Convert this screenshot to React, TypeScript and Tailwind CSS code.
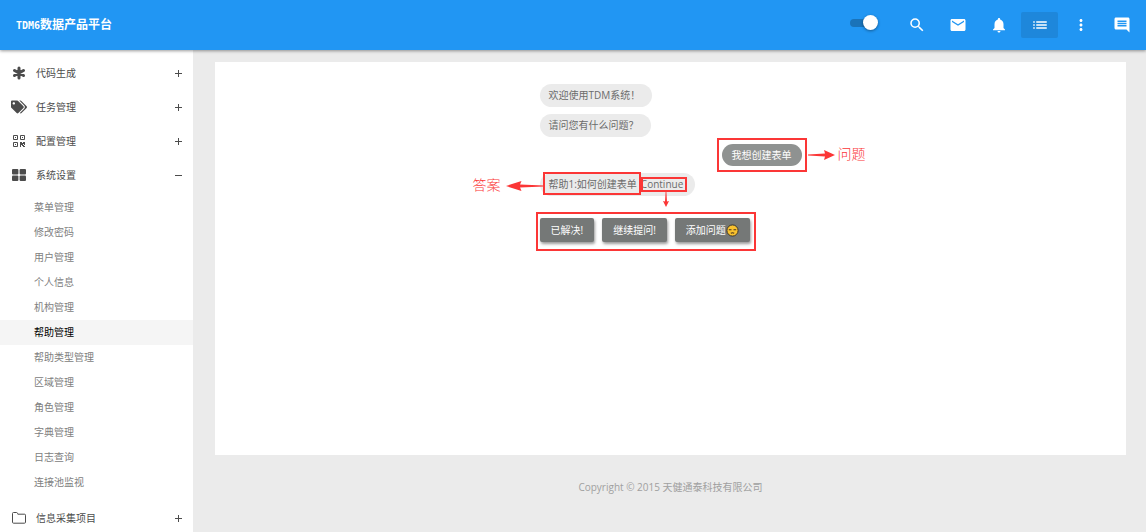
import type { ComponentType, ReactNode } from "react";
import { FaTags } from "react-icons/fa";
import {
  MdEmail,
  MdList,
  MdMessage,
  MdMoreVert,
  MdNotifications,
  MdSearch,
} from "react-icons/md";

type IconType = ComponentType<{ className?: string }>;

function AsteriskIcon({ className }: { className?: string }) {
  return (
    <svg
      aria-hidden="true"
      className={className}
      stroke="currentColor"
      strokeLinecap="round"
      strokeWidth="3"
      viewBox="0 0 14 14"
    >
      <path d="M7 2v10M2.5 4.5l9 5M11.5 4.5l-9 5" />
    </svg>
  );
}

function QrIcon({ className }: { className?: string }) {
  return (
    <svg aria-hidden="true" className={className} fill="none" stroke="currentColor" viewBox="0 0 14 14">
      <path d="M1.5 1.5h4v4h-4zM8.5 1.5h4v4h-4zM1.5 8.5h4v4h-4z" />
      <path d="M3 3h1v1H3zM10 3h1v1h-1zM3 10h1v1H3z" fill="currentColor" stroke="none" />
      <path
        d="M8 8h2v1h1V8h2v3h-1v-1h-1v1h1v1h1v1h-2v-1h-1v-1H9v2H8z"
        fill="currentColor"
        stroke="none"
      />
    </svg>
  );
}

function BlocksIcon({ className }: { className?: string }) {
  return (
    <svg aria-hidden="true" className={className} fill="currentColor" viewBox="0 0 14 14">
      <rect height="5.6" rx="1" width="6.4" x="0" y="1" />
      <rect height="5.6" rx="1" width="6.4" x="7.6" y="1" />
      <rect height="5.6" rx="1" width="6.4" x="0" y="7.4" />
      <rect height="5.6" rx="1" width="6.4" x="7.6" y="7.4" />
    </svg>
  );
}

function FolderIcon({ className }: { className?: string }) {
  return (
    <svg aria-hidden="true" className={className} fill="none" stroke="currentColor" viewBox="0 0 14 14">
      <path d="M.5 2.5q0-1 1-1h3q.8 0 1 .8l.3.9h6.7q1 0 1 1v7q0 1-1 1h-11q-1 0-1-1z" />
    </svg>
  );
}

type MenuItem = { label: string; icon: IconType; children?: string[] };

const menu: MenuItem[] = [
  { label: "代码生成", icon: AsteriskIcon },
  { label: "任务管理", icon: FaTags },
  { label: "配置管理", icon: QrIcon },
  {
    label: "系统设置",
    icon: BlocksIcon,
    children: [
      "菜单管理",
      "修改密码",
      "用户管理",
      "个人信息",
      "机构管理",
      "帮助管理",
      "帮助类型管理",
      "区域管理",
      "角色管理",
      "字典管理",
      "日志查询",
      "连接池监视",
    ],
  },
  { label: "信息采集项目", icon: FolderIcon },
];

const current = "帮助管理";

const actions = [
  { label: "搜索", icon: MdSearch },
  { label: "邮件", icon: MdEmail },
  { label: "通知", icon: MdNotifications },
  { label: "列表", icon: MdList, active: true },
  { label: "更多", icon: MdMoreVert },
  { label: "消息", icon: MdMessage, flip: true },
];

function Header() {
  return (
    <header className="relative z-10 flex h-[50px] items-center justify-between bg-[#2196f3] pr-1.5 pl-4 text-white shadow-[0_1px_3px_rgba(0,0,0,0.4)]">
      <a
        className="font-['DejaVu_Sans_Mono','Noto_Sans_CJK_SC',monospace] text-[12px] font-bold"
        href="#"
      >
        <span className="text-[10px]">TDM6</span>数据产品平台
      </a>
      <div className="flex items-center gap-1 pb-px">
        <label className="relative mr-4 mb-1 flex h-4 w-7 items-center">
          <input aria-label="切换布局" className="peer sr-only" defaultChecked type="checkbox" />
          <span className="h-2 w-full rounded-full bg-[#1a73b9]" />
          <span className="absolute left-0 size-[15px] rounded-full bg-white shadow-[0_1px_3px_rgba(0,0,0,0.4)] peer-checked:left-[13px]" />
        </label>
        {actions.map(({ label, icon: Icon, active, flip }) => (
          <button
            key={label}
            aria-label={label}
            className={[
              "grid h-[26px] w-[37px] place-items-center rounded-xs",
              active ? "bg-[#1e87db]" : "",
            ].join(" ")}
            type="button"
          >
            <Icon className={flip ? "size-[18px] -scale-x-100" : "size-[18px]"} />
          </button>
        ))}
      </div>
    </header>
  );
}

function Sidebar() {
  return (
    <aside className="w-[193px] shrink-0 bg-white pt-1.5 text-[10px]">
      <nav aria-label="主菜单">
        <ul>
          {menu.map(({ label, icon: Icon, children }) => (
            <li key={label}>
              <button
                aria-expanded={Boolean(children)}
                className="flex h-[34px] w-full items-center pr-2.5 pl-[11px] text-[#4c4c4c]"
                type="button"
              >
                <span className="mr-[9px] grid w-4 shrink-0 place-items-center">
                  <Icon className={Icon === FaTags ? "size-4" : "size-[14px]"} />
                </span>
                <span className="flex-1 text-left">{label}</span>
                <svg aria-hidden="true" className="size-[9px]" stroke="currentColor" viewBox="0 0 9 9">
                  <path d={children ? "M1 4.5h7" : "M1 4.5h7M4.5 1v7"} />
                </svg>
              </button>
              {children && (
                <ul className="pt-[3px] pb-1.5">
                  {children.map((child) => (
                    <li key={child}>
                      <a
                        className={[
                          "flex h-[25px] items-center pl-[34px]",
                          child === current ? "bg-[#f5f5f5] text-black" : "text-[#808080]",
                        ].join(" ")}
                        href="#"
                      >
                        {child}
                      </a>
                    </li>
                  ))}
                </ul>
              )}
            </li>
          ))}
        </ul>
      </nav>
    </aside>
  );
}

function Bubble({ children }: { children: ReactNode }) {
  return (
    <p className="relative flex h-[23px] w-fit items-center rounded-full bg-[#ebebeb] pr-3 pl-[9px] text-[#6b6b6b]">
      {children}
    </p>
  );
}

// Points right; flip or rotate through className for other directions.
function Arrow({ className }: { className: string }) {
  return (
    <svg
      aria-hidden="true"
      className={className}
      fill="#fb3636"
      preserveAspectRatio="none"
      viewBox="0 0 27 10"
    >
      <path d="M0 4.4 17 3.4 16 0 27 5 16 10 17 6.6 0 5.6z" />
    </svg>
  );
}

function DownArrow({ className }: { className: string }) {
  return (
    <svg aria-hidden="true" className={className} fill="#fb3636" viewBox="0 0 6 15">
      <path d="M2.6 0h.8L4 9.5 6 9 3 15 0 9l2 .5z" />
    </svg>
  );
}

const note =
  "absolute font-['Liberation_Serif','Noto_Sans_CJK_SC',serif] text-[14px] leading-5 font-light whitespace-nowrap text-[#fb3636]";

function Reply({ children }: { children: ReactNode }) {
  return (
    <button
      className="h-6 rounded-xs bg-[#757877] px-[11px] whitespace-nowrap text-white shadow-[1px_2px_3px_rgba(0,0,0,0.4)]"
      type="button"
    >
      {children}
    </button>
  );
}

function SadFace() {
  return (
    <svg aria-label="失望" className="size-[13px]" role="img" viewBox="0 0 13 13">
      <circle cx="6.5" cy="6.5" fill="#f9c22e" r="5.6" stroke="#3f382c" />
      <path
        d="M2.8 5.8h2.7M7.5 5.8h2.7M4.8 9.3q1.7-1.2 3.4 0"
        fill="none"
        stroke="#4a3520"
        strokeWidth="1.1"
      />
    </svg>
  );
}

function Chat() {
  return (
    <section className="min-h-[393px] bg-white pt-[22px] text-[10px]">
      <div className="mx-auto flex w-[262px] flex-col">
        <Bubble>欢迎使用TDM系统！</Bubble>
        <div className="mt-[7px]">
          <Bubble>请问您有什么问题？</Bubble>
        </div>

        <div className="relative mt-[7px] self-end">
          <p className="flex h-[22px] items-center rounded-full bg-[#8f9291] px-2.5 text-white">
            我想创建表单
          </p>
          <span className="absolute -inset-x-[5px] -inset-y-[6px] border-2 border-[#fb3636]" />
          <Arrow className="absolute top-1.5 left-full ml-1.5 h-[10px] w-[27px]" />
          <span className={`${note} top-px left-full ml-9`}>问题</span>
        </div>

        <div className="relative mt-[7px]">
          <Bubble>
            <span className="relative pr-1">
              帮助1:如何创建表单
              <span className="absolute -top-[5px] right-0 -bottom-[3px] -left-1.5 border-2 border-[#fb3636]" />
            </span>
            <a className="relative" href="#">
              Continue
              <span className="absolute inset-y-0 -right-1 left-0 border-2 border-[#fb3636]" />
              <DownArrow className="absolute top-full left-[22px] h-[15px] w-1.5" />
            </a>
          </Bubble>
          <Arrow className="absolute top-2 right-full -mr-1 h-[10px] w-[38px] rotate-180" />
          <span className={`${note} top-[3px] right-full mr-[39px]`}>答案</span>
        </div>

        <div className="relative mt-[22px] flex w-fit gap-2">
          <Reply>已解决!</Reply>
          <Reply>继续提问!</Reply>
          <Reply>
            <span className="flex items-center">
              添加问题
              <SadFace />
            </span>
          </Reply>
          <span className="pointer-events-none absolute -top-1.5 -right-1.5 -bottom-[9px] -left-1 border-2 border-[#fb3636]" />
        </div>
      </div>
    </section>
  );
}

export default function App() {
  return (
    <div className="flex min-h-screen flex-col bg-[#ebebeb] font-['Open_Sans','Noto_Sans_CJK_SC',sans-serif]">
      <Header />
      <div className="flex flex-1">
        <Sidebar />
        <main className="flex-1 pt-3 pr-5 pl-[22px]">
          <Chat />
          <footer className="pt-6 text-center text-[10px] leading-4 text-[#a0a0a0]">
            Copyright © 2015 天健通泰科技有限公司
          </footer>
        </main>
      </div>
    </div>
  );
}
